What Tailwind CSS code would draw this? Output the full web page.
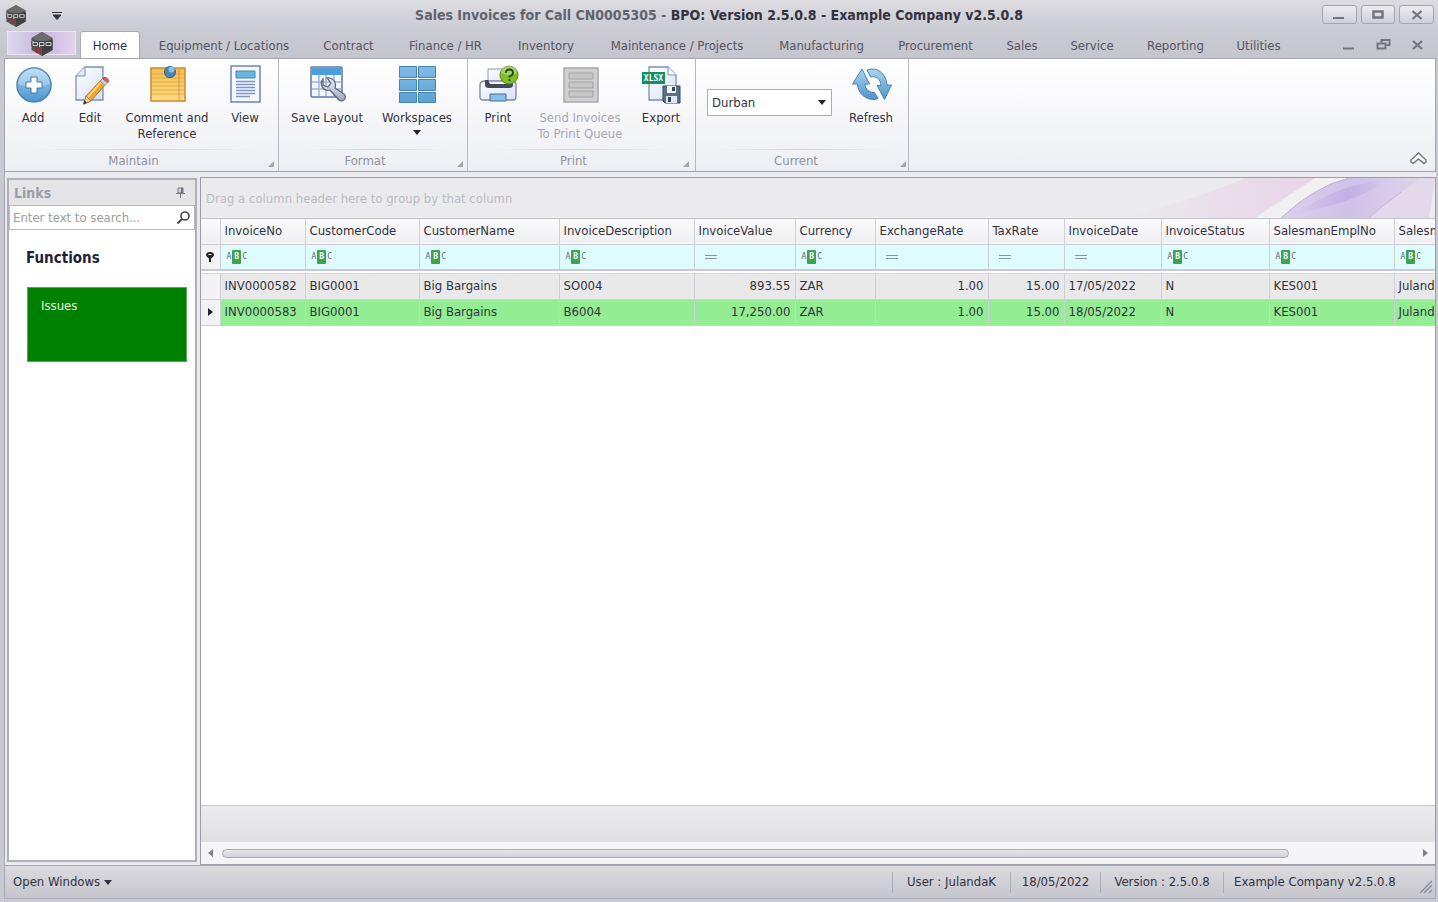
<!DOCTYPE html>
<html lang="en">
<head>
<meta charset="utf-8">
<meta name="viewport" content="width=device-width, initial-scale=1">
<title>Sales Invoices for Call CN0005305</title>
<script src="https://cdn.jsdelivr.net/npm/@tailwindcss/browser@4"></script>
</head>
<body class="flex h-screen flex-col overflow-hidden bg-[#c9c9d1] font-['DejaVu_Sans_Condensed','Noto_Sans',sans-serif] text-[13px] leading-4 text-[#32323f]">

<!-- shared icon parts -->
<svg class="absolute size-0" aria-hidden="true">
  <defs>
    <linearGradient id="blue" x1="0" y1="0" x2="0" y2="1"><stop offset="0" stop-color="#a9d6f0"/><stop offset="1" stop-color="#4c94cc"/></linearGradient>
    <linearGradient id="tile" x1="0" y1="0" x2="0" y2="1"><stop offset="0" stop-color="#80bce6"/><stop offset="1" stop-color="#5b9fd4"/></linearGradient>
    <linearGradient id="paper" x1="0" y1="0" x2="1" y2="1"><stop offset="0" stop-color="#ffffff"/><stop offset="1" stop-color="#d6e0f6"/></linearGradient>
    <linearGradient id="gold" x1="0" y1="0" x2="0" y2="1"><stop offset="0" stop-color="#f5bd50"/><stop offset="1" stop-color="#fddb86"/></linearGradient>
    <linearGradient id="steel" x1="0" y1="0" x2="0" y2="1"><stop offset="0" stop-color="#f4f6fb"/><stop offset="1" stop-color="#9ba5b8"/></linearGradient>
    <symbol id="logo" viewBox="0 0 24 24">
      <path d="M12 0l10.500 6v12L12 24 1.500 18V6z" fill="#555556"/>
      <path d="M12 0l10.500 6L12 11 1.500 6z" fill="#6c6c6d"/>
      <path d="M12 12l10.500-5v11L12 24z" fill="#414143"/>
      <path d="M1.500 9h21v5.500h-21z" fill="#3a3a3c"/>
      <path d="M3 9v4.500h4.500v-3H3M9.500 15v-4.500h4.500V13.500H9.500M16 10.500h5V13.500h-5z" fill="none" stroke="#d4d4d6" stroke-width="1"/>
      <path d="M10.500 16.500h-4v4h4v-2H9" fill="none" stroke="#8e3338" stroke-width="1.200"/>
    </symbol>
    <symbol id="corner" viewBox="0 0 6 6"><path d="M6 0v6H0z" fill="#a3a3ad"/></symbol>
  </defs>
</svg>

<!-- title bar -->
<header class="flex h-[31px] shrink-0 items-center bg-linear-to-b from-[#dcdce1] to-[#cacad2] px-1">
  <div class="flex w-28 items-center gap-6 pl-px">
    <svg class="size-[22px]"><use href="#logo"/></svg>
    <button aria-label="Customize quick access" class="pl-px"><svg width="10" height="8" viewBox="0 0 10 8"><path d="M0 .5h10M1 3h8L5 7.500z" fill="#32323f" stroke="#32323f" stroke-width="1"/></svg></button>
  </div>
  <h1 class="flex-1 pb-0.5 text-center text-[14px] font-bold"><span class="text-[#62626f]">Sales Invoices for Call CN0005305 - </span>BPO: Version 2.5.0.8 - Example Company v2.5.0.8</h1>
  <div class="flex w-28 justify-end gap-1 pb-0.5">
    <button aria-label="Minimize" class="grid h-[19px] w-[35px] place-items-center rounded-[3px] border border-[#a5a5b0] bg-linear-to-b from-[#ececf0] to-[#cfcfd6]"><svg width="12" height="10"><path d="M0 8h11" stroke="#747480" stroke-width="2"/></svg></button>
    <button aria-label="Maximize" class="grid h-[19px] w-[35px] place-items-center rounded-[3px] border border-[#a5a5b0] bg-linear-to-b from-[#ececf0] to-[#cfcfd6]"><svg width="12" height="10"><rect x="1.500" y="1.500" width="9" height="6" fill="none" stroke="#747480" stroke-width="2.500"/></svg></button>
    <button aria-label="Close" class="grid h-[19px] w-[35px] place-items-center rounded-[3px] border border-[#a5a5b0] bg-linear-to-b from-[#ececf0] to-[#cfcfd6]"><svg width="12" height="10"><path d="M1.500 1l9 8m0-8l-9 8" stroke="#747480" stroke-width="2.200"/></svg></button>
  </div>
</header>

<!-- ribbon tabs -->
<nav class="flex h-[27px] shrink-0 items-stretch bg-linear-to-b from-[#cacad2] to-[#c5c5ce] pr-1 pl-[7px] text-[#545463]">
  <button aria-label="Application menu" class="mr-1 grid h-6 w-[69px] place-items-center border border-[#e9e4ef] bg-linear-to-r from-[#dcd9ee] via-[#c8b4dc] to-[#e3d3ee]"><svg class="size-6"><use href="#logo"/></svg></button>
  <button class="-mb-px w-[60px] shrink-0 rounded-t-[3px] border border-b-0 border-[#aaaab5] bg-white text-[#32323f]">Home</button>
  <button class="ml-0.5 w-[164px] pt-0.5">Equipment / Locations</button>
  <button class="w-[85px] pt-0.5">Contract</button>
  <button class="w-[109px] pt-0.5">Finance / HR</button>
  <button class="w-[92px] pt-0.5">Inventory</button>
  <button class="w-[170px] pt-0.5">Maintenance / Projects</button>
  <button class="w-[119px] pt-0.5">Manufacturing</button>
  <button class="w-[109px] pt-0.5">Procurement</button>
  <button class="w-[64px] pt-0.5">Sales</button>
  <button class="w-[76px] pt-0.5">Service</button>
  <button class="w-[91px] pt-0.5">Reporting</button>
  <button class="w-[75px] pt-0.5">Utilities</button>
  <div class="ml-auto flex items-center gap-5 pr-2.5">
    <button aria-label="Minimize child window"><svg width="14" height="12"><path d="M1 9.500h11" stroke="#747480" stroke-width="2"/></svg></button>
    <button aria-label="Restore child window"><svg width="15" height="13" fill="none" stroke="#747480" stroke-width="2"><path d="M5.500 4.500V2h8v5H10.500"/><rect x="1.500" y="5.500" width="8" height="5"/></svg></button>
    <button aria-label="Close child window"><svg width="13" height="12"><path d="M2 2l9 8m0-8l-9 8" stroke="#747480" stroke-width="2.200"/></svg></button>
  </div>
</nav>

<!-- ribbon -->
<section class="mr-0.5 ml-1 flex h-[114px] shrink-0 border border-[#a5a5b0] bg-linear-to-b from-white to-[#eeeff4]">
  <div class="flex w-[274px] flex-col border-r border-[#b8b8c2]">
    <div class="flex flex-1 items-start pt-1 pl-px">
      <button class="flex w-[54px] flex-col items-center gap-[5px]">
        <svg width="42" height="42" viewBox="0 0 42 42"><circle cx="22" cy="22" r="17" fill="url(#blue)" stroke="#4983b4" stroke-width="1.500"/><path d="M6 21a16 16 0 0 1 32 0q-16 6-32 0" fill="#fff" opacity=".25"/><path d="M19 14h6v5h5v6h-5v5h-6v-5h-5v-6h5z" fill="#fff" stroke="#3f78ac"/></svg>Add</button>
      <button class="flex w-[60px] flex-col items-center gap-[5px]">
        <svg width="42" height="42" viewBox="0 0 42 42"><path d="M16 4h18v33H7V13z" fill="url(#paper)" stroke="#7d8cc0" stroke-width="1.300"/><path d="M16 4v9H7" fill="#e4eaf8" stroke="#7d8cc0"/><path d="M17 33L32 17l5 4-15 17-7 3z" fill="#f2a431" stroke="#9c6428" stroke-width=".8"/><path d="M19 34l14-16" stroke="#ffda7c" stroke-width="1.800"/><path d="M31 18l2.500-2.500 5 4L36 22.500z" fill="#c8cedb" stroke="#8a8d98" stroke-width=".8"/><path d="M33.500 15.500q2.500-2.500 5 0t0 4z" fill="#e5604c" stroke="#a54c45" stroke-width=".8"/><path d="M17 33l-2.500 8 7.500-3z" fill="#f0cf9a" stroke="#8e7044" stroke-width=".8"/><path d="M15.500 37l-1.500 4.500 4-1.500z" fill="#444"/></svg>Edit</button>
      <button class="flex w-[94px] flex-col items-center gap-[5px]">
        <svg width="42" height="42" viewBox="0 0 42 42"><path d="M5 5h34v33H5z" fill="url(#gold)" stroke="#c58a32" stroke-width="1.500"/><path d="M6 11h32M6 15h32M6 19h32M6 23h32M6 27h32M6 31h32" stroke="#e0a23e" stroke-width=".8"/><path d="M33 6v31" stroke="#df7e45" stroke-width=".8"/><path d="M20 13l9-2" stroke="#8e5d20" stroke-width="4" opacity=".4"/><circle cx="24" cy="9" r="5.500" fill="#4d88b5" stroke="#2e5c86"/><circle cx="25.500" cy="6.500" r="3" fill="#8fc0e0"/></svg>Comment and<br>Reference</button>
      <button class="flex w-[62px] flex-col items-center gap-[5px]">
        <svg width="42" height="42" viewBox="0 0 42 42"><path d="M7 3h29v36H7z" fill="#f5f8fe" stroke="#7183b8" stroke-width="1.500"/><path d="M12 8h19v7H12z" fill="#6bb4e0" stroke="#4986b8"/><path d="M12 18.500h19M12 21.500h19M12 24.500h19M12 27.500h19M12 30.500h19M12 33.500h14" stroke="#7e93c8" stroke-width="1.300"/></svg>View</button>
    </div>
    <div class="flex h-[22px] items-end text-[#92929d]"><span class="ml-1 flex flex-1 flex-col self-stretch text-center"><i class="mb-[3px] ml-5 h-px bg-linear-to-r from-transparent via-[#d2d2da] to-transparent"></i>Maintain</span><button aria-label="Maintain options" class="w-5 pb-1 pl-2.5"><svg class="size-1.5"><use href="#corner"/></svg></button></div>
  </div>

  <div class="flex w-[189px] flex-col border-r border-[#b8b8c2]">
    <div class="flex flex-1 items-start pt-1">
      <button class="flex w-24 flex-col items-center gap-[5px]">
        <svg width="42" height="42" viewBox="0 0 42 42"><rect x="5" y="4" width="31" height="30" rx="1" fill="#f2f6fd" stroke="#5e77b0" stroke-width="1.500"/><path d="M6 5h29v7H6z" fill="#4e9fd9"/><path d="M6 19h29M6 26h29M13 12v21M20 12v21M28 12v21" stroke="#a1b4dc" stroke-width="1.500"/><path d="M17 16c-4 5 0 13 7 11l8 9c4 5 10-1 6-5l-9-6c2-6-3-11-8-10l4 5-3 4-5-2z" fill="url(#steel)" stroke="#626b7e" stroke-width="1.300"/></svg>Save Layout</button>
      <button class="flex w-[84px] flex-col items-center gap-[5px]">
        <svg width="42" height="42" viewBox="0 0 42 42" fill="url(#tile)" stroke="#4383b5"><path d="M3.500 3.500h17v11h-17zM22.500 3.500h17v11h-17zM3.500 16.500h17v11h-17zM22.500 16.500h17v11h-17zM3.500 29.500h17v10h-17zM22.500 29.500h17v10h-17z"/></svg>
        <span class="flex flex-col items-center gap-1">Workspaces<svg width="8" height="5"><path d="M0 0h8L4 5z" fill="#22222e"/></svg></span></button>
    </div>
    <div class="flex h-[22px] items-end text-[#92929d]"><span class="ml-1 flex flex-1 flex-col self-stretch text-center"><i class="mb-[3px] ml-5 h-px bg-linear-to-r from-transparent via-[#d2d2da] to-transparent"></i>Format</span><button aria-label="Format options" class="w-5 pb-1 pl-2.5"><svg class="size-1.5"><use href="#corner"/></svg></button></div>
  </div>

  <div class="flex w-[228px] flex-col border-r border-[#b8b8c2]">
    <div class="flex flex-1 items-start pt-1">
      <button class="flex w-[60px] flex-col items-center gap-[5px]">
        <svg width="42" height="42" viewBox="0 0 42 42"><path d="M11 6h20v16H11z" fill="url(#paper)" stroke="#8794b9"/><path d="M3 22q0-4 5-4h26q5 0 5 4v12q0 3-3 3H6q-3 0-3-3z" fill="url(#paper)" stroke="#7b87ad" stroke-width="1.300"/><path d="M8 17h3l2 4h18l2-4h3v5q0 3-4 3H12q-4 0-4-3z" fill="#434a5c"/><path d="M13 31h16v7H13z" fill="#7cc3ee" stroke="#5a6888"/><circle cx="32" cy="12" r="9" fill="#80bd26" stroke="#548a18"/><path d="M24 10a8 8 0 0 1 16 0q-8 4-16 0" fill="#fff" opacity=".3"/><path d="M29 10q0-3.500 3.500-3.500T36 10q0 2-3.500 3.500v1M32.500 16v2" fill="none" stroke="#24481b" stroke-width="1.800"/></svg>Print</button>
      <button disabled class="flex w-[104px] flex-col items-center gap-[5px] text-[#a9a9b2]">
        <svg width="42" height="42" viewBox="0 0 42 42"><path d="M5 5h34v34H5z" fill="#d0d0d1" stroke="#a9a9aa" stroke-width="1.500"/><path d="M10 10h24v6H10zM10 19h24v6H10zM10 28h24v6H10z" fill="#c6c6c7" stroke="#a3a3a4"/></svg>Send Invoices<br>To Print Queue</button>
      <button class="flex w-[58px] flex-col items-center gap-[5px]">
        <svg width="42" height="42" viewBox="0 0 42 42"><path d="M9 4h19l8 8v25H9z" fill="url(#paper)" stroke="#7d8cc0" stroke-width="1.300"/><path d="M28 4v8h8" fill="#fff" stroke="#7d8cc0"/><path d="M2 9h23v12H2z" fill="#129064"/><text x="13.500" y="18" text-anchor="middle" font-family="DejaVu Sans Mono" font-size="8" font-weight="bold" fill="#fff">XLSX</text><path d="M23 23h17v17H25l-2-2z" fill="#5b7087" stroke="#34465c"/><path d="M27 23h9v7h-9z" fill="#f2f4f8"/><path d="M32 24h3v4h-3z" fill="#34465c"/><path d="M26 33h11v7H26z" fill="#dce6f5"/><path d="M28 34h3v5h-3z" fill="#34465c"/></svg>Export</button>
    </div>
    <div class="flex h-[22px] items-end text-[#92929d]"><span class="ml-3 flex flex-1 flex-col self-stretch text-center"><i class="mb-[3px] ml-3 h-px bg-linear-to-r from-transparent via-[#d2d2da] to-transparent"></i>Print</span><button aria-label="Print options" class="w-7 pb-1 pl-4"><svg class="size-1.5"><use href="#corner"/></svg></button></div>
  </div>

  <div class="flex w-[213px] flex-col border-r border-[#b8b8c2]">
    <div class="flex flex-1 items-start pt-1">
      <div class="relative mt-[26px] ml-[11px]">
        <select aria-label="Branch" class="h-[27px] w-[125px] appearance-none border border-[#acacb6] bg-white pl-1">
          <option>Durban</option>
        </select>
        <svg class="pointer-events-none absolute top-[11px] right-1.5" width="8" height="5"><path d="M0 0h8L4 5z" fill="#22222e"/></svg>
      </div>
      <button class="ml-1.5 flex w-[66px] flex-col items-center gap-[5px]">
        <svg width="42" height="42" viewBox="0 0 42 42" fill="url(#blue)" stroke="#4c82aa" stroke-linejoin="round"><path d="M12 6L2.500 21H7.500C8 31 16 37 25 36.500L28 35.500 24.500 29.500C19 30 15.500 26 15 21H19.500z"/><path d="M17 7C27 3.500 36 10 37 22H41.500L34.500 36.500 27 22.500H31C30.500 16 26 12.500 20.500 14z"/></svg>Refresh</button>
    </div>
    <div class="flex h-[22px] items-end text-[#92929d]"><span class="ml-2 flex flex-1 flex-col self-stretch text-center"><i class="mb-[3px] ml-3 h-px bg-linear-to-r from-transparent via-[#d2d2da] to-transparent"></i>Current</span><button aria-label="Current options" class="w-5 pb-1 pl-3"><svg class="size-1.5"><use href="#corner"/></svg></button></div>
  </div>
  <button aria-label="Collapse ribbon" class="mt-auto mr-2 mb-1.5 ml-auto"><svg width="17" height="13" viewBox="0 0 17 13" fill="#fff" stroke="#747480" stroke-width="1.400"><path d="M8.500 1L1 8v2l2 1.500L8.500 7l5.500 4.500L16 10V8z"/></svg></button>
</section>

<!-- workspace -->
<main class="mr-0.5 ml-1 flex min-h-0 flex-1 gap-[3px] border-l border-[#a5a5b0] bg-[#ebebef] pt-[5px] pl-0.5">
  <aside class="mt-px mb-[3px] flex w-[190px] shrink-0 flex-col border-2 border-[#b0b0ba] bg-white">
    <div class="flex h-[25px] shrink-0 items-center justify-between bg-[#e5e5e8] pr-2.5 pl-[5px]">
      <h2 class="text-[14px] font-bold text-[#9a9da8]">Links</h2>
      <button aria-label="Pin panel"><svg width="9" height="11" viewBox="0 0 9 11"><path d="M2 1h5v5H2z" fill="#d5d5da" stroke="#747480"/><path d="M5 1h2v5H5zM0 6h9v1H0zM4 7h1v4H4z" fill="#747480"/></svg></button>
    </div>
    <label class="flex h-[25px] shrink-0 items-center border border-[#b9b9c3] pr-1 pl-[3px]">
      <input type="text" aria-label="Search links" placeholder="Enter text to search..." class="min-w-0 flex-1 outline-none placeholder:text-[#9b9ba3]">
      <svg width="13" height="13" fill="none" stroke="#454550" stroke-width="1.600"><circle cx="8" cy="5" r="4"/><path d="M5 8l-4.500 4.500" stroke-width="2"/></svg>
    </label>
    <h3 class="mt-5 ml-[17px] text-[15px] leading-4 font-bold text-[#1f1f3a]">Functions</h3>
    <button class="mt-[21px] mr-2 ml-[18px] flex h-[75px] border border-[#4fa85a] bg-[#008000] pt-2.5 pl-[13px] text-[#e6f4e6]">Issues</button>
  </aside>

  <section class="flex min-w-0 flex-1 flex-col border border-[#9c9ca8] bg-white">
    <div class="flex h-[40px] shrink-0 items-center justify-between overflow-hidden bg-[#ebebed] pl-[5px] text-[#bcbcc2]">
      <span class="pt-0.5">Drag a column header here to group by that column</span>
      <svg width="310" height="40" viewBox="0 0 310 40">
        <defs>
          <linearGradient id="pinkwash"><stop offset="0" stop-color="#ebebed"/><stop offset="1" stop-color="#e8d3e8"/></linearGradient>
          <linearGradient id="violet" x1="0" y1="0" x2="1" y2="0"><stop offset="0" stop-color="#d9d0ec"/><stop offset=".45" stop-color="#cfc1e8"/><stop offset="1" stop-color="#e0d9ec"/></linearGradient>
          <linearGradient id="bloom"><stop offset="0" stop-color="#b9a4e2" stop-opacity="0"/><stop offset=".6" stop-color="#b9a4e2" stop-opacity=".6"/><stop offset="1" stop-color="#b9a4e2" stop-opacity="0"/></linearGradient>
        </defs>
        <path d="M0 40Q80 18 120 0H190L130 40z" fill="url(#pinkwash)"/>
        <path d="M130 40L190 0h36Q190 12 156 40z" fill="#f0f0f2"/>
        <path d="M156 40Q190 8 224 0h86l-6 40z" fill="url(#violet)"/>
        <path d="M156 40Q190 8 224 0" fill="none" stroke="#bfb2da"/>
        <path d="M170 36Q216 5 260 2 240 22 170 36" fill="url(#bloom)"/>
        <path d="M244 40Q275 14 296 0h14l-7 40z" fill="#e3d9ea"/>
        <path d="M244 40Q260 25 276 14" fill="none" stroke="#c9b2e2"/>
      </svg>
    </div>
    <div class="min-h-0 flex-1 overflow-hidden border-t border-[#c4c4cc]">
      <table class="w-[1334px] table-fixed border-collapse text-left whitespace-nowrap [&_td]:border-r [&_td]:border-[#cfcfd8] [&_td]:px-1 [&_th]:border-r [&_th]:border-[#cfcfd8] [&_th]:px-1 [&_th]:font-normal">
        <colgroup><col class="w-[19px]"><col class="w-[85px]"><col class="w-[114px]"><col class="w-[140px]"><col class="w-[135px]"><col class="w-[101px]"><col class="w-[80px]"><col class="w-[113px]"><col class="w-[76px]"><col class="w-[97px]"><col class="w-[108px]"><col class="w-[125px]"><col class="w-[141px]"></colgroup>
        <thead>
          <tr class="h-[25px] border-b border-[#c9c9d2] bg-linear-to-b from-[#fafafb] to-[#f0f0f4]"><th aria-label="Row state"></th><th>InvoiceNo</th><th>CustomerCode</th><th>CustomerName</th><th>InvoiceDescription</th><th>InvoiceValue</th><th>Currency</th><th>ExchangeRate</th><th>TaxRate</th><th>InvoiceDate</th><th>InvoiceStatus</th><th>SalesmanEmplNo</th><th>SalesmanName</th></tr>
          <tr id="filters" class="h-[26px] border-b-2 border-[#c9c9d2] bg-[#dffdfe]"><td class="bg-[#f3f3f6]"><svg class="mx-auto" width="8" height="10"><path d="M0 3a4 3 0 0 1 8 0Q7 6 5 6.500V10H3V6.500Q1 6 0 3" fill="#22222e"/><path d="M2.500 2.500h3" stroke="#fff"/></svg></td></tr>
          <tr class="h-[3px] border-b border-[#d6d6dc] bg-white"><td colspan="13"></td></tr>
        </thead>
        <tbody>
          <tr class="h-[26px] border-b border-[#cfcfd8] bg-[#e9e9e9]"><td class="bg-[#f3f3f6]"></td><td>INV0000582</td><td>BIG0001</td><td>Big Bargains</td><td>SO004</td><td class="text-right">893.55</td><td>ZAR</td><td class="text-right">1.00</td><td class="text-right">15.00</td><td>17/05/2022</td><td>N</td><td>KES001</td><td>Julanda Kessler</td></tr>
          <tr class="h-[26px] border-b border-[#cfcfd8] bg-[#92ed93]"><td class="bg-[#f3f3f6]"><svg class="mx-auto" width="5" height="8"><path d="M0 0l5 4-5 4z" fill="#22222e"/></svg></td><td>INV0000583</td><td>BIG0001</td><td>Big Bargains</td><td>B6004</td><td class="text-right">17,250.00</td><td>ZAR</td><td class="text-right">1.00</td><td class="text-right">15.00</td><td>18/05/2022</td><td>N</td><td>KES001</td><td>Julanda Kessler</td></tr>
        </tbody>
      </table>
    </div>
    <div class="h-[37px] shrink-0 border-t border-[#c4c4cc] bg-linear-to-b from-[#ebebed] to-[#e0e0e4]"></div>
    <div class="flex h-[22px] shrink-0 items-center bg-[#f5f5f8] px-[7px]">
      <button aria-label="Scroll left"><svg width="6" height="8"><path d="M5 0v8L0 4z" fill="#80808c"/></svg></button>
      <div class="mx-2 flex-1"><div class="h-[9px] rounded-full border border-[#aaaab5] bg-linear-to-b from-[#e6e6ea] to-[#d2d2d9]" style="width:89.5%"></div></div>
      <button aria-label="Scroll right"><svg width="6" height="8"><path d="M1 0v8l5-4z" fill="#80808c"/></svg></button>
    </div>
  </section>
</main>

<!-- status bar -->
<footer class="mr-0.5 mb-[3px] ml-1 flex h-[34px] shrink-0 items-center border border-[#a9a9b4] bg-linear-to-b from-[#dadadf] to-[#c6c6cd] pl-2">
  <button class="flex items-center gap-1">Open Windows<svg width="8" height="5"><path d="M0 0h8L4 5z" fill="#32323f"/></svg></button>
  <div class="ml-auto flex h-[21px] items-center [&_span]:flex [&_span]:h-full [&_span]:items-center [&_span]:border-l [&_span]:border-[#adadb8]">
    <span class="w-[118px] justify-center">User : JulandaK</span>
    <span class="w-[90px] justify-center">18/05/2022</span>
    <span class="w-[123px] justify-center">Version : 2.5.0.8</span>
    <span class="w-[196px] pl-[10px]">Example Company v2.5.0.8</span>
  </div>
  <svg class="mt-auto mb-1 w-4" width="14" height="14" stroke="#8b8b98" stroke-width="1.300"><path d="M1 13L13 1M5 13l8-8M10 13l3-3"/></svg>
</footer>

<template id="abc"><td><button aria-label="Text filter" class="flex items-center px-0.5 font-['DejaVu_Sans_Mono'] text-[8px] leading-3 text-[#5b6b72]">A<b class="mx-px rounded-[1px] bg-[#3fa24c] px-0.5 py-px text-white">B</b>C</button></td></template>
<template id="eq"><td><button aria-label="Equals filter" class="block pl-1.5"><svg width="12" height="6"><path d="M0 1.500h12M0 4.500h12" stroke="#8796a0"/></svg></button></td></template>
<script>
  const row = document.getElementById('filters');
  for (const kind of ['abc','abc','abc','abc','eq','abc','eq','eq','eq','abc','abc','abc'])
    row.append(document.getElementById(kind).content.cloneNode(true));
</script>
</body>
</html>
